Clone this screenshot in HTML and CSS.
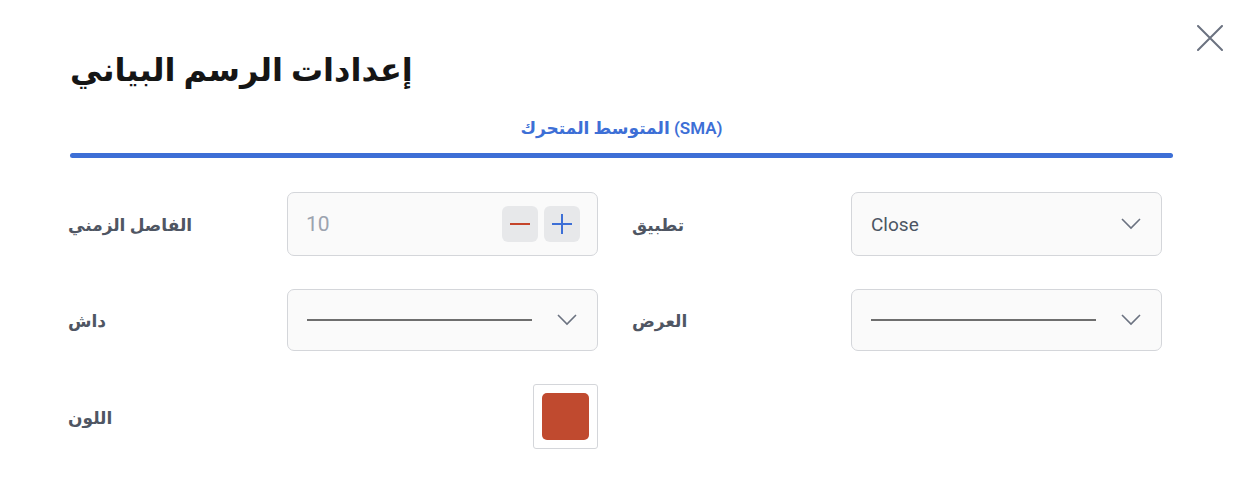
FILE: index.html
```html
<!DOCTYPE html>
<html lang="ar">
<head>
<meta charset="utf-8">
<link rel="stylesheet" href="styles.css">
</head>
<body>
<div class="dialog">
  <button class="close" aria-label="close">
    <svg width="26" height="26" viewBox="0 0 26 26"><path d="M1 1 L25 25 M25 1 L1 25" stroke="#6b7280" stroke-width="2" stroke-linecap="round"/></svg>
  </button>
  <h1 class="title">إعدادات الرسم البياني</h1>
  <div class="tabs">
    <div class="tab">المتوسط المتحرك (SMA)</div>
    <div class="tab-bar"></div>
  </div>
  <div class="grid">
    <div class="field">
      <span class="label">الفاصل الزمني</span>
      <div class="box number">
        <span class="value">10</span>
        <div class="steppers">
          <span class="step minus"><svg width="20" height="20" viewBox="0 0 20 20"><path d="M0 10 H20" stroke="#c5452b" stroke-width="2"/></svg></span>
          <span class="step plus"><svg width="20" height="20" viewBox="0 0 20 20"><path d="M0 10 H20 M10 0 V20" stroke="#3d6fd6" stroke-width="2"/></svg></span>
        </div>
      </div>
    </div>
    <div class="field">
      <span class="label">تطبيق</span>
      <div class="box select">
        <span class="sel-text">Close</span>
        <svg class="chev" width="20" height="12" viewBox="0 0 20 12"><path d="M1 1 L10 10 L19 1" fill="none" stroke="#6b7280" stroke-width="1.6"/></svg>
      </div>
    </div>
    <div class="field">
      <span class="label">داش</span>
      <div class="box select short">
        <span class="line"></span>
        <svg class="chev" width="20" height="12" viewBox="0 0 20 12"><path d="M1 1 L10 10 L19 1" fill="none" stroke="#6b7280" stroke-width="1.6"/></svg>
      </div>
    </div>
    <div class="field">
      <span class="label">العرض</span>
      <div class="box select short">
        <span class="line"></span>
        <svg class="chev" width="20" height="12" viewBox="0 0 20 12"><path d="M1 1 L10 10 L19 1" fill="none" stroke="#6b7280" stroke-width="1.6"/></svg>
      </div>
    </div>
    <div class="field">
      <span class="label">اللون</span>
      <div class="color-cell">
        <div class="swatch-box"><div class="swatch"></div></div>
      </div>
    </div>
  </div>
</div>
</body>
</html>
```

FILE: styles.css
```css
* { box-sizing: border-box; }
html, body { margin: 0; padding: 0; background: #ffffff; }
body {
  font-family: Roboto, "Noto Sans", "DejaVu Sans", sans-serif;
  width: 1248px;
  height: 500px;
  overflow: hidden;
}
.dialog {
  position: relative;
  padding: 44px 75px 0 70px;
}
.close {
  position: absolute;
  top: 25px;
  right: 25px;
  width: 26px;
  height: 26px;
  padding: 0;
  border: none;
  background: none;
  display: flex;
}
.title {
  margin: 0;
  font-size: 32px;
  font-weight: 700;
  color: #151515;
  line-height: 52px;
  direction: rtl;
  text-align: left;
  width: max-content;
}
.tabs {
  margin-top: 10px;
  display: flex;
  flex-direction: column;
  align-items: center;
}
.tab {
  color: #3d6fd6;
  font-size: 17px;
  font-weight: 600;
  line-height: 28px;
  padding-top: 8px;
  padding-bottom: 11px;
}
.tab-bar {
  width: 100%;
  height: 5px;
  background: #3d6fd6;
  border-radius: 3px;
}
.grid {
  margin-top: 34px;
  display: grid;
  grid-template-columns: 528px 528px;
  column-gap: 36px;
  row-gap: 33px;
  width: 1092px;
}
.field {
  display: grid;
  grid-template-columns: 217px 311px;
  align-items: center;
}
.label {
  font-size: 17px;
  font-weight: 600;
  color: #4f5663;
  direction: rtl;
  text-align: left;
  width: max-content;
  margin-left: -2px;
  padding-top: 2px;
}
.box {
  height: 64px;
  border: 1px solid #d4d6da;
  border-radius: 7px;
  background: #fafafa;
  display: flex;
  align-items: center;
}
.box.short { height: 62px; }
.number {
  padding: 0 17px 0 18px;
  justify-content: space-between;
}
.value {
  font-size: 21px;
  color: #9ca3af;
}
.steppers { display: flex; gap: 6px; }
.step {
  width: 36px;
  height: 36px;
  border-radius: 6px;
  background: #e7e8ea;
  display: flex;
  align-items: center;
  justify-content: center;
}
.select {
  padding: 0 20px 0 19px;
  justify-content: space-between;
}
.sel-text {
  font-size: 19px;
  color: #4b5563;
}
.line {
  width: 225px;
  height: 2px;
  background: #6e6e6e;
}
.chev { display: block; }
.color-cell {
  height: 65px;
  display: flex;
  justify-content: flex-end;
}
.swatch-box {
  width: 65px;
  height: 65px;
  border: 1px solid #d4d6da;
  border-radius: 3px;
  padding: 8px;
  background: #ffffff;
}
.swatch {
  width: 100%;
  height: 100%;
  border-radius: 5px;
  background: #c04a2f;
}
```
